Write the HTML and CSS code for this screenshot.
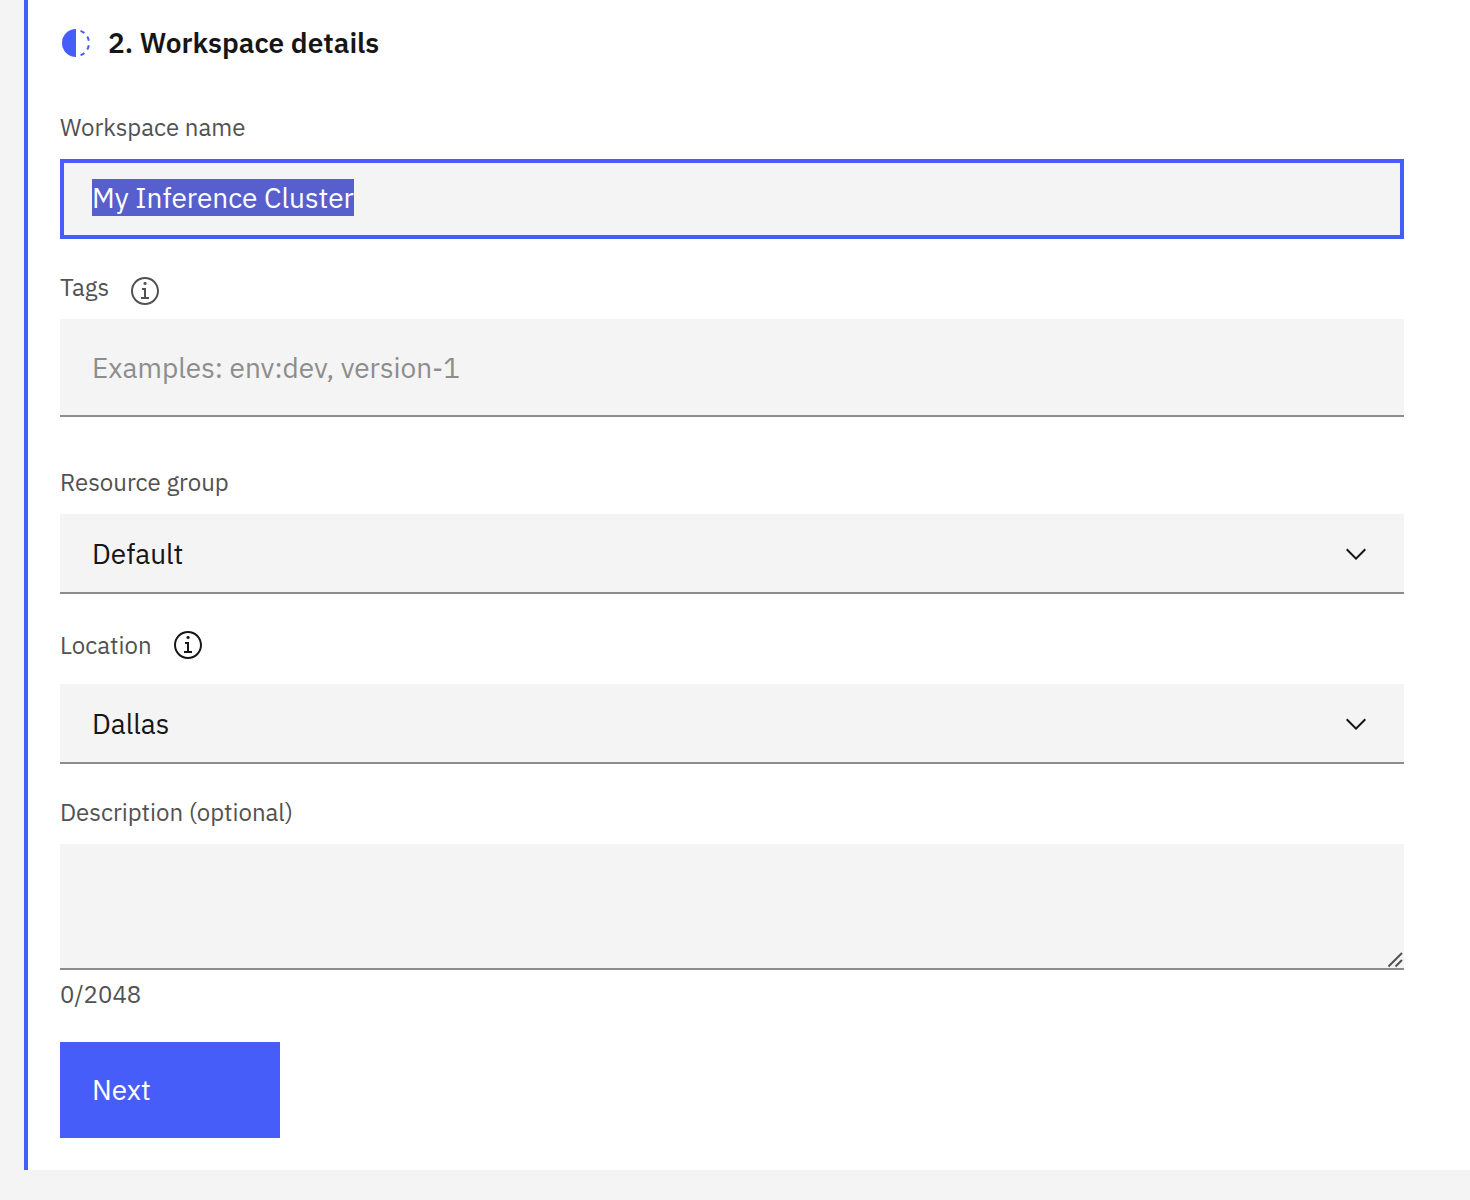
FILE: index.html
```html
<!DOCTYPE html>
<html lang="en">
<head>
<meta charset="utf-8">
<meta name="viewport" content="width=device-width, initial-scale=1">
<title>Workspace details</title>
<link rel="stylesheet" href="styles.css">
</head>
<body>
<main class="step">
  <header class="step-header">
    <svg class="icon icon-status" viewBox="0 0 32 32" aria-hidden="true">
      <path d="M23.764 6.859l1.285-1.531A13.976 13.976 0 0 0 20.867 2.887l-.683 1.878A11.973 11.973 0 0 1 23.764 6.859Z"/>
      <path d="M27.81 14l1.968-.413A13.889 13.889 0 0 0 28.14 9.046L26.409 10A12.52 12.52 0 0 1 27.81 14Z"/>
      <path d="M20.184 27.235l.683 1.878a13.976 13.976 0 0 0 4.182-2.441l-1.285-1.531A11.973 11.973 0 0 1 20.184 27.235Z"/>
      <path d="M26.409 22 28.14 23a14.14 14.14 0 0 0 1.638-4.587L27.81 18.066A12.152 12.152 0 0 1 26.409 22Z"/>
      <path d="M16 30V2a14 14 0 0 0 0 28Z"/>
    </svg>
    <h2 class="step-title">2. Workspace details</h2>
  </header>

  <form class="form">
    <div class="field">
      <label class="label" for="name">Workspace name</label>
      <input class="control control-name" id="name" type="text" value="My Inference Cluster" autofocus>
    </div>

    <div class="field field-tags">
      <div class="label-row">
        <label class="label" for="tags">Tags</label>
        <button class="info info-muted" type="button" aria-label="About tags">
          <svg class="icon" viewBox="0 0 16 16" aria-hidden="true">
            <path d="M8.5 11V6.5h-2v1h1V11H6v1h4v-1zM8 3.5c-.4 0-.8.3-.8.8S7.6 5 8 5s.8-.3.8-.8-.4-.7-.8-.7z"/>
            <path d="M8 15c-3.9 0-7-3.1-7-7s3.1-7 7-7 7 3.1 7 7-3.1 7-7 7zM8 2C4.7 2 2 4.7 2 8s2.7 6 6 6 6-2.7 6-6-2.7-6-6-6z"/>
          </svg>
        </button>
      </div>
      <input class="control control-tags" id="tags" type="text" placeholder="Examples: env:dev, version-1">
    </div>

    <div class="field">
      <label class="label" for="group">Resource group</label>
      <div class="select">
        <select class="control" id="group"><option>Default</option></select>
        <svg class="icon chevron" viewBox="0 0 16 16" aria-hidden="true"><path d="M8 11L3 6l.7-.7L8 9.6l4.3-4.3.7.7z"/></svg>
      </div>
    </div>

    <div class="field">
      <div class="label-row label-row-tall">
        <label class="label" for="location">Location</label>
        <button class="info" type="button" aria-label="About location">
          <svg class="icon" viewBox="0 0 16 16" aria-hidden="true">
            <path d="M8.5 11V6.5h-2v1h1V11H6v1h4v-1zM8 3.5c-.4 0-.8.3-.8.8S7.6 5 8 5s.8-.3.8-.8-.4-.7-.8-.7z"/>
            <path d="M8 15c-3.9 0-7-3.1-7-7s3.1-7 7-7 7 3.1 7 7-3.1 7-7 7zM8 2C4.7 2 2 4.7 2 8s2.7 6 6 6 6-2.7 6-6-2.7-6-6-6z"/>
          </svg>
        </button>
      </div>
      <div class="select">
        <select class="control" id="location"><option>Dallas</option></select>
        <svg class="icon chevron" viewBox="0 0 16 16" aria-hidden="true"><path d="M8 11L3 6l.7-.7L8 9.6l4.3-4.3.7.7z"/></svg>
      </div>
    </div>

    <div class="field">
      <label class="label" for="description">Description (optional)</label>
      <div class="textarea">
        <textarea class="control control-description" id="description" maxlength="2048" aria-describedby="count"></textarea>
        <svg class="grip" viewBox="0 0 16 16" aria-hidden="true"><path d="M.5 14.500L14 1M7.500 14.500L14 8"/></svg>
      </div>
      <div class="counter" id="count">0/2048</div>
    </div>

    <button class="next" type="submit">Next</button>
  </form>
</main>
<script src="script.js"></script>
</body>
</html>
```
FILE: styles.css
```css
* { box-sizing: border-box; }

body {
  margin: 0;
  padding-left: 24px;
  background: #f4f4f4;
  color: #161616;
  font-family: "IBM Plex Sans", "Noto Sans", sans-serif;
  font-size: 28px;
}

.step {
  padding: 25px 66px 32px 32px;
  border-left: 4px solid #465dfa;
  background: #fff;
}

.step-header {
  display: flex;
  align-items: center;
  gap: 16px;
  margin-bottom: 50px;
}

.step-title {
  margin: 0;
  font-size: 28px;
  font-weight: 600;
  line-height: 36px;
}

.icon {
  display: block;
  flex: none;
  width: 32px;
  height: 32px;
  fill: currentColor;
}

.icon-status { color: #465dfa; }

.form,
.field {
  display: flex;
  flex-direction: column;
}

.form { gap: 32px; }
.field { gap: 16px; }
.field-tags { margin-bottom: 17px; }

.label,
.counter {
  color: #525252;
  font-size: 24px;
  line-height: 32px;
}

.label-row {
  display: flex;
  align-items: center;
  gap: 20px;
  height: 32px;
}

.label-row-tall {
  height: 42px;
  padding-bottom: 4px;
}

.info {
  padding: 0;
  border: 0;
  background: none;
  color: #161616;
  cursor: pointer;
}

.info-muted {
  padding-top: 8px;
  color: #525252;
}

.control {
  display: block;
  width: 100%;
  height: 80px;
  margin: 0;
  padding: 0 32px;
  border: 0;
  border-bottom: 2px solid #8d8d8d;
  border-radius: 0;
  outline: 0;
  background: #f4f4f4;
  color: #161616;
  font: inherit;
  appearance: none;
}

.control::placeholder {
  color: #8d8d8d;
  opacity: 1;
}

.control::selection {
  background: rgba(85, 94, 204, 0.996);
  color: #fff;
}

.control-name {
  padding: 0 28px 4px;
  border: 4px solid #465dfa;
}

.control-tags { height: 98px; }

.control-description {
  height: 126px;
  padding: 20px 32px;
  resize: vertical;
}

.control-description::-webkit-resizer { background: transparent; }

.select,
.textarea {
  display: grid;
}

.select > *,
.textarea > * {
  grid-area: 1 / 1;
}

.chevron {
  place-self: center end;
  margin-right: 32px;
  pointer-events: none;
}

.grip {
  place-self: end;
  width: 16px;
  height: 16px;
  margin-bottom: 2px;
  fill: none;
  stroke: #525252;
  stroke-width: 2;
  pointer-events: none;
}

.counter { margin-top: -8px; }

.next {
  width: 220px;
  height: 96px;
  padding: 0 32px 2px;
  border: 0;
  background: #465dfa;
  color: #fff;
  font: inherit;
  text-align: left;
  cursor: pointer;
}
```
FILE: script.js
```js
const nameField = document.getElementById("name");
nameField.focus();
nameField.select();

const description = document.getElementById("description");
const counter = document.getElementById("count");
description.addEventListener("input", () => {
  counter.textContent = `${description.value.length}/${description.maxLength}`;
});
```
